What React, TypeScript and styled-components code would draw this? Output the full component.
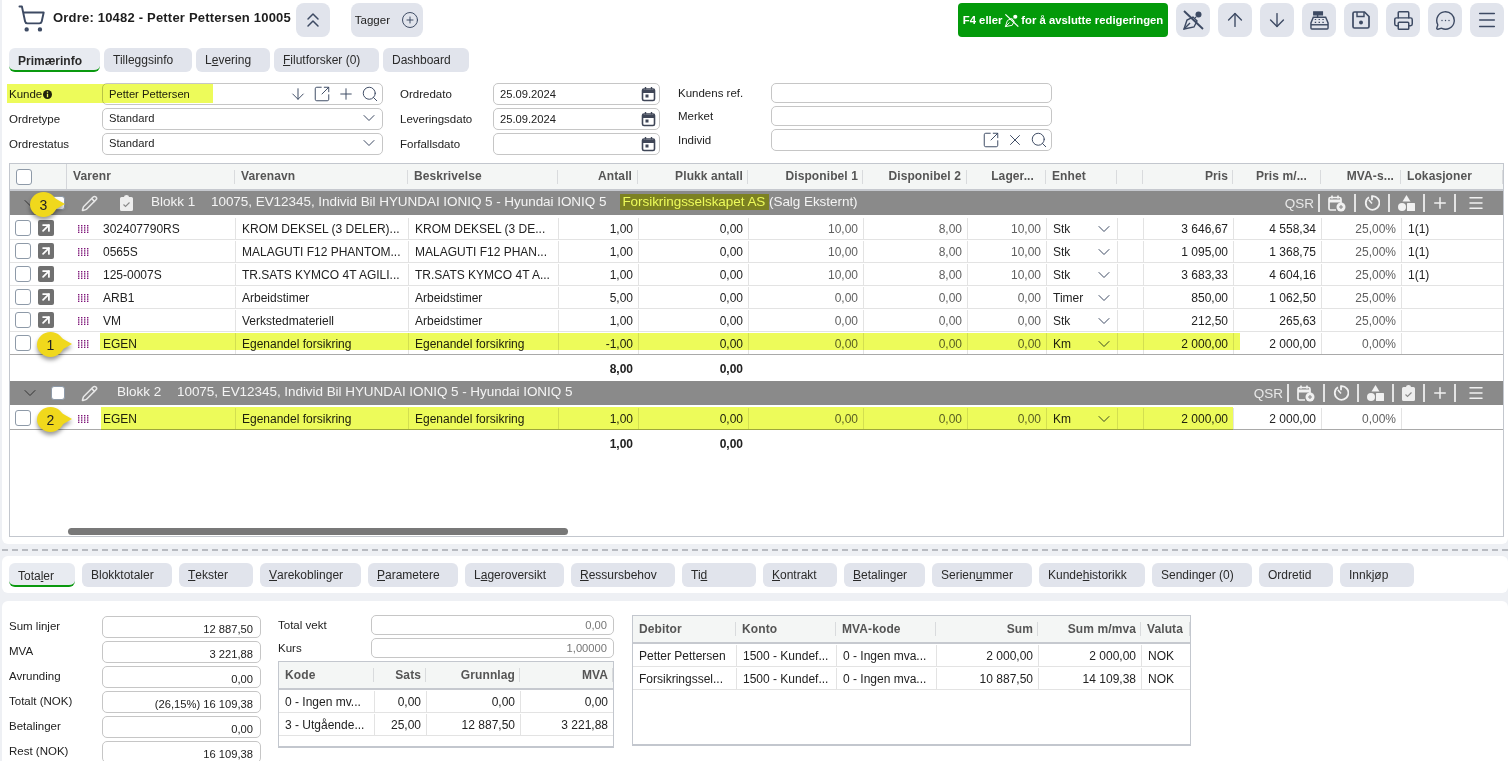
import React, { ReactNode } from "react";
import styled, { createGlobalStyle } from "styled-components";
import {
  ArrowDown,
  ArrowUp,
  ArrowUpRight,
  ChevronDown,
  ChevronsUp,
  CirclePlus,
  Menu,
  MessageCircleMore,
  Pencil,
  Plus,
  Printer,
  Search,
  ShoppingCart,
  SquareArrowOutUpRight,
  X,
} from "lucide-react";

const GlobalStyle = createGlobalStyle`
  html, body {
    margin: 0;
    padding: 0;
    background: #eef0f4;
  }
  * { box-sizing: border-box; }
  body {
    font-family: "Liberation Sans", Arial, sans-serif;
    font-size: 12px;
    color: #222;
  }
`;

const INK = "#3d4a63";
const YELLOW = "#edfb5a";

const Page = styled.div`
  width: 1508px;
  height: 761px;
  overflow: hidden;
  padding-left: 2px;
  display: flex;
  flex-direction: column;
`;

const TopPanel = styled.section`
  flex: none;
  height: 544px;
  background: #fff;
  padding: 3px 4px 7px 7px;
  border-radius: 0 0 6px 6px;
  display: flex;
  flex-direction: column;
`;

const Toolbar = styled.header`
  flex: none;
  height: 34px;
  display: flex;
  align-items: flex-start;
`;

const CartSlot = styled.span`
  width: 44px;
  height: 30px;
  padding-left: 8px;
  color: ${INK};
  display: flex;
  align-items: center;
`;

const Title = styled.h1`
  margin: 7px 5px 0 0;
  font-size: 13px;
  line-height: 16px;
  font-weight: 700;
  color: #1d1d1d;
  white-space: nowrap;
  letter-spacing: 0.2px;
`;

const ToolButton = styled.button`
  width: 34px;
  height: 34px;
  padding: 0;
  border: 0;
  border-radius: 8px;
  background: #e1e4ec;
  color: ${INK};
  display: flex;
  align-items: center;
  justify-content: center;
  font: inherit;
`;

const TagButton = styled(ToolButton)`
  width: 72px;
  margin-left: 21px;
  gap: 11px;
  color: #222;
  font-size: 11.5px;
  svg {
    color: ${INK};
  }
`;

const RightTools = styled.div`
  margin-left: auto;
  display: flex;
  gap: 8px;
`;

const FinishButton = styled.button`
  width: 210px;
  height: 34px;
  padding: 0;
  border: 0;
  border-radius: 4px;
  background: #039a0a;
  color: #fff;
  font: inherit;
  font-size: 11.3px;
  font-weight: 700;
  display: flex;
  align-items: center;
  justify-content: center;
  gap: 2px;
  white-space: nowrap;
`;

const TabRow = styled.nav`
  flex: none;
  display: flex;
  gap: 4px;
  margin-top: 11px;
`;

const Tab = styled.div<{ $w: number; $active?: boolean }>`
  flex: none;
  width: ${(p) => p.$w}px;
  height: 24px;
  padding: ${(p) => (p.$active ? "3px 0 0 9px" : "0 0 1px 9px")};
  background: ${(p) => (p.$active ? "#e8ebf1" : "#e1e4ec")};
  border-radius: 6px;
  border-bottom: ${(p) => (p.$active ? "2px solid #0a990f" : "0")};
  display: flex;
  align-items: center;
  white-space: nowrap;
  color: #2a2a2a;
  font-weight: ${(p) => (p.$active ? 700 : 400)};
  u {
    text-underline-offset: 1px;
  }
`;

const FormArea = styled.div`
  flex: none;
  display: flex;
  margin-top: 11px;
  height: 80px;
`;

const FormColumn = styled.div<{ $input: number; $pitch: number; $gap?: number }>`
  display: grid;
  grid-template-columns: 93px ${(p) => p.$input}px;
  grid-auto-rows: ${(p) => p.$pitch}px;
  margin-left: ${(p) => p.$gap ?? 0}px;
  position: relative;
`;

const FieldLabel = styled.label<{ $h?: number }>`
  display: flex;
  align-items: center;
  height: ${(p) => p.$h ?? 22}px;
  color: #222;
  font-size: 11.5px;
  gap: 1px;
`;

const FieldBox = styled.div<{ $h?: number; $right?: boolean; $muted?: boolean }>`
  height: ${(p) => p.$h ?? 22}px;
  background: #fff;
  border: 1px solid #c6c6c6;
  border-radius: 5px;
  padding: 0 6px;
  font-size: 11.2px;
  display: flex;
  align-items: center;
  justify-content: ${(p) => (p.$right ? "flex-end" : "flex-start")};
  color: ${(p) => (p.$muted ? "#777" : "#222")};
  white-space: nowrap;
`;

const SelectBox = styled(FieldBox)`
  padding-bottom: 2px;
`;

const BoxIcons = styled.span`
  margin: 0 -3px 0 auto;
  display: flex;
  align-items: center;
  gap: 6px;
  color: ${INK};
`;

const Marker = styled.span<{ $l: number; $t: number; $w: number; $h: number }>`
  position: absolute;
  left: ${(p) => p.$l}px;
  top: ${(p) => p.$t}px;
  width: ${(p) => p.$w}px;
  height: ${(p) => p.$h}px;
  background: ${YELLOW};
  mix-blend-mode: multiply;
  pointer-events: none;
`;

const GridFrame = styled.div`
  flex: none;
  height: 374px;
  width: 1495px;
  border: 1px solid #c3c7ce;
  background: #fff;
  display: flex;
  flex-direction: column;
  position: relative;
`;

const ORDER_COLS =
  "57px 168px 173px 150px 80px 110px 115px 104px 79px 71px 26px 90px 88px 80px 102px";

const Row = styled.div<{ $cols: string; $h?: number; $line?: string }>`
  flex: none;
  display: grid;
  grid-template-columns: ${(p) => p.$cols};
  height: ${(p) => p.$h ?? 23}px;
  border-bottom: 1px solid ${(p) => p.$line ?? "#e3e3e3"};
  position: relative;
`;

const HeadRow = styled(Row)`
  background: #f4f6f5;
  border-bottom: 2px solid #c6c9cf;
`;

const HeadCell = styled.div<{ $right?: boolean; $pad?: number }>`
  display: flex;
  align-items: center;
  justify-content: ${(p) => (p.$right ? "flex-end" : "flex-start")};
  padding: 0 ${(p) => p.$pad ?? 5}px 1px 6px;
  font-weight: 700;
  color: #555;
  white-space: nowrap;
  overflow: hidden;
  letter-spacing: 0.1px;
  background: linear-gradient(#d9dbdd, #d9dbdd) right center / 1px 14px no-repeat;
`;

const CheckHead = styled.div`
  display: flex;
  align-items: center;
  padding-left: 6px;
  border-right: 1px solid #d4d6da;
`;

const Cell = styled.div<{ $right?: boolean; $muted?: boolean; $bold?: boolean; $plain?: boolean }>`
  display: flex;
  align-items: center;
  justify-content: ${(p) => (p.$right ? "flex-end" : "flex-start")};
  padding: 0 5px 0 6px;
  margin-top: 1px;
  border-left: ${(p) => (p.$plain ? "0" : "1px solid #e3e3e3")};
  color: ${(p) => (p.$muted ? "#5f5f5f" : "#222")};
  font-weight: ${(p) => (p.$bold ? 700 : 400)};
  white-space: nowrap;
  overflow: hidden;
`;

const SelectCell = styled(Cell)`
  justify-content: space-between;
  padding-right: 3px;
  svg {
    color: ${INK};
  }
`;

const LeadCell = styled.div`
  display: flex;
  align-items: center;
  gap: 7px;
  padding-left: 5px;
`;

const CheckBox = styled.span<{ $size?: number }>`
  width: ${(p) => p.$size ?? 16}px;
  height: ${(p) => p.$size ?? 16}px;
  flex: none;
  display: block;
  background: #fff;
  border: 1px solid #8e9aa8;
  border-radius: 3px;
`;

const LinkBadge = styled.span`
  width: 16px;
  height: 16px;
  flex: none;
  border-radius: 2px;
  background: #707070;
  color: #fff;
  display: flex;
  align-items: center;
  justify-content: center;
`;

const ItemCell = styled(Cell)`
  padding-left: 11px;
  gap: 14px;
`;

const BlockBar = styled.div`
  flex: none;
  height: 24px;
  margin-bottom: 2px;
  background: #8a8a8a;
  color: #f4f4f4;
  display: flex;
  align-items: center;
  padding: 0 18px 0 14px;
  gap: 16px;
  position: relative;
  white-space: nowrap;
`;

const BlockChevron = styled.span`
  width: 11px;
  height: 20px;
  color: #333;
  display: flex;
  align-items: center;
  justify-content: center;
  svg {
    flex: none;
  }
`;

const ClipSlot = styled.span`
  display: flex;
  margin-left: 6px;
`;

const BlockName = styled.span<{ $lead: number }>`
  width: 60px;
  margin: 0 -16px 2px ${(p) => p.$lead}px;
  flex: none;
  font-size: 13.5px;
  line-height: 16px;
`;

const BlockText = styled.span`
  margin-bottom: 2px;
  font-size: 13.5px;
  line-height: 16px;
  letter-spacing: -0.05px;
`;

const Insurer = styled.span`
  margin-left: 14px;
  padding: 0 0 1px 2px;
  background: #7c8122;
  color: ${YELLOW};
`;

const BlockTools = styled.div`
  margin-left: auto;
  display: flex;
  align-items: center;
  gap: 8px;
  color: #f1f1f1;
  font-size: 13.5px;
`;

const ToolSep = styled.span`
  width: 2px;
  height: 18px;
  background: #e4e4e4;
`;

const QsrLabel = styled.span`
  color: #e8e8e8;
  margin-right: -4px;
`;

const PlusSlot = styled.span`
  display: flex;
  margin: 0 -3px 0 -2px;
`;

const MenuSlot = styled.span`
  display: flex;
  margin-left: 3px;
`;

const SumRow = styled(Row)`
  height: 26px;
  border-bottom: 0;
`;

const Spacer = styled.div`
  flex: 1;
`;

const ScrollTrack = styled.div`
  flex: none;
  height: 7px;
  margin: 0 0 1px 58px;
`;

const ScrollThumb = styled.div`
  width: 500px;
  height: 7px;
  border-radius: 4px;
  background: #787878;
`;

const Bubble = styled.span<{ $l: number; $t: number }>`
  position: absolute;
  left: ${(p) => p.$l}px;
  top: ${(p) => p.$t}px;
  width: 27px;
  height: 25px;
  border-radius: 50%;
  background: #f0d81c;
  color: #222;
  font-size: 14px;
  display: flex;
  align-items: center;
  justify-content: center;
  filter: drop-shadow(0 3px 2px rgba(0, 0, 0, 0.4));
  z-index: 2;
  &::after {
    content: "";
    position: absolute;
    left: 21px;
    top: 4px;
    border-left: 14px solid #f0d81c;
    border-top: 8px solid transparent;
    border-bottom: 8px solid transparent;
  }
`;

const SplitLine = styled.div`
  flex: none;
  height: 12px;
  display: flex;
  align-items: center;
  &::before {
    content: "";
    width: 100%;
    border-top: 2px dashed #b8bbc1;
  }
`;

const LowerTabBand = styled.nav`
  flex: none;
  height: 37px;
  background: #fff;
  border-radius: 6px;
  padding: 7px 0 0 7px;
  display: flex;
  gap: 7px;
`;

const LowerTab = styled(Tab)`
  font-weight: 400;
  font-size: 12px;
`;

const LowerPanel = styled.section`
  margin-top: 8px;
  flex: 1;
  min-height: 0;
  background: #fff;
  border-radius: 6px 6px 0 0;
  padding: 14px 0 0 7px;
  display: flex;
`;

const TotalsGrid = styled.div`
  display: grid;
  grid-template-columns: 93px 159px;
  grid-auto-rows: 25px;
  width: 252px;
  padding-top: 1px;
`;

const TotalValue = styled(FieldBox)`
  align-items: flex-end;
  padding: 0 7px 2px 5px;
`;

const MiddleColumn = styled.div`
  width: 336px;
  margin-left: 17px;
`;

const MiddleField = styled.div`
  display: grid;
  grid-template-columns: 93px 243px;
  height: 23px;
`;

const MiniTable = styled.div<{ $h: number }>`
  height: ${(p) => p.$h}px;
  border: 1px solid #c3c7ce;
  border-bottom: 2px solid #c3c7ce;
  background: #fff;
`;

const MiniHead = styled(HeadRow)`
  height: 28px;
`;

const DebitorTable = styled(MiniTable)`
  width: 559px;
  margin-left: 18px;
`;

const Drag = () => (
  <svg width="11" height="8" viewBox="0 0 11 8" style={{ flex: "none" }}>
    {[0, 3, 6, 9].map((x) =>
      [0, 2.2, 4.4, 6.6].map((y) => <rect key={`${x}-${y}`} x={x} y={y} width="1.4" height="1.4" fill="#7d1478" />)
    )}
  </svg>
);

const CalendarMini = () => (
  <svg width="15" height="16" viewBox="0 0 15 16" fill="none">
    <rect x="1.5" y="3" width="12" height="11.5" rx="1.5" stroke="#3f4657" strokeWidth="1.6" />
    <path d="M1.5 5.5h12" stroke="#3f4657" strokeWidth="3" />
    <path d="M4.5 1v2.5M10.5 1v2.5" stroke="#3f4657" strokeWidth="1.4" />
    <rect x="4.5" y="8.5" width="3" height="3" fill="#3f4657" />
  </svg>
);

const NibOff = ({ color, size = 22 }: { color: string; size?: number }) => (
  <svg width={size} height={size} viewBox="0 0 22 22" fill="none" stroke={color} strokeWidth="1.4">
    <path d="M2 20l3-9 6-3 4 4-3 6z" />
    <path d="M2 20l6-6" />
    <circle cx="16.5" cy="5.5" r="3" fill={color} stroke="none" />
    <path d="M13 8l1 1" />
    <path d="M2 2l19 18" strokeWidth="1.9" />
  </svg>
);

const CashRegister = () => (
  <svg width="19" height="19" viewBox="0 0 20 20" fill="none" stroke={INK} strokeWidth="1.5">
    <rect x="4" y="1" width="9" height="3" fill={INK} />
    <path d="M8 4v2.500" />
    <path d="M3.500 6.500h13l2.500 6v5.500a1 1 0 0 1-1 1H2a1 1 0 0 1-1-1v-5.500z" />
    <path d="M1 14.500h18" />
    <path d="M5 9h1.500M9 9h1.500M13 9h1.500M5 12h1.500M9 12h1.500M13 12h1.500" strokeWidth="1.200" />
  </svg>
);

const Floppy = () => (
  <svg width="18" height="18" viewBox="0 0 18 18" fill="none" stroke={INK} strokeWidth="1.700">
    <path d="M2.500 1h10L17 5.500v10a1.500 1.500 0 0 1-1.500 1.500h-13A1.500 1.500 0 0 1 1 15.500v-13A1.500 1.500 0 0 1 2.500 1z" />
    <path d="M5 1v4.500h7V1" strokeWidth="1.400" />
    <circle cx="9" cy="11.500" r="2" fill={INK} stroke="none" />
  </svg>
);

const ClipboardSolid = () => (
  <svg width="13" height="16" viewBox="0 0 13 16">
    <path
      d="M1.5 2H4a2.5 2 0 0 1 5 0h2.5A1.5 1.5 0 0 1 13 3.5v11a1.5 1.5 0 0 1-1.5 1.5h-10A1.5 1.5 0 0 1 0 14.500v-11A1.500 1.500 0 0 1 1.500 2z"
      fill="#eeeeee"
    />
    <path d="M3.500 9.500l2 2 4-4" fill="none" stroke="#8a8a8a" strokeWidth="1.100" />
  </svg>
);

const CalendarAdd = () => (
  <svg width="18" height="17" viewBox="0 0 18 17" fill="none">
    <path d="M1 4.500h12v3H1z" fill="#f1f1f1" />
    <path d="M8 15H2.500A1.500 1.500 0 0 1 1 13.500V4a1.500 1.500 0 0 1 1.500-1.500h9A1.500 1.500 0 0 1 13 4v4" stroke="#f1f1f1" strokeWidth="1.700" />
    <path d="M4 .5v3M10 .5v3" stroke="#f1f1f1" strokeWidth="1.700" />
    <circle cx="13" cy="12" r="4.500" fill="#f1f1f1" />
    <path d="M13 10v4M11 12h4" stroke="#8a8a8a" strokeWidth="1.100" />
  </svg>
);

const Dial = () => (
  <svg width="16" height="16" viewBox="0 0 16 16" fill="none" stroke="#f1f1f1" strokeWidth="1.800">
    <path d="M5 2.200A6.800 6.800 0 1 0 8 1.200v4" />
    <path d="M4.800 4.800 8 8.500" strokeWidth="1.500" />
  </svg>
);

const Shapes = () => (
  <svg width="17" height="16" viewBox="0 0 17 16" fill="#f1f1f1">
    <path d="M8.500 0l4 6.500h-8z" />
    <circle cx="4" cy="12" r="4" />
    <rect x="9" y="8" width="8" height="8" rx="0.500" />
  </svg>
);

interface OrderLine {
  no: string;
  name: string;
  desc: string;
  antall: string;
  d1: string;
  d2: string;
  lager: string;
  enhet: string;
  pris: string;
  prisM: string;
  mva: string;
  lok?: string;
  linked?: boolean;
}

const firstBlock: OrderLine[] = [
  { no: "302407790RS", name: "KROM DEKSEL (3 DELER)...", desc: "KROM DEKSEL (3 DE...", antall: "1,00", d1: "10,00", d2: "8,00", lager: "10,00", enhet: "Stk", pris: "3 646,67", prisM: "4 558,34", mva: "25,00%", lok: "1(1)", linked: true },
  { no: "0565S", name: "MALAGUTI F12 PHANTOM...", desc: "MALAGUTI F12 PHAN...", antall: "1,00", d1: "10,00", d2: "8,00", lager: "10,00", enhet: "Stk", pris: "1 095,00", prisM: "1 368,75", mva: "25,00%", lok: "1(1)", linked: true },
  { no: "125-0007S", name: "TR.SATS KYMCO 4T AGILI...", desc: "TR.SATS KYMCO 4T A...", antall: "1,00", d1: "10,00", d2: "8,00", lager: "10,00", enhet: "Stk", pris: "3 683,33", prisM: "4 604,16", mva: "25,00%", lok: "1(1)", linked: true },
  { no: "ARB1", name: "Arbeidstimer", desc: "Arbeidstimer", antall: "5,00", d1: "0,00", d2: "0,00", lager: "0,00", enhet: "Timer", pris: "850,00", prisM: "1 062,50", mva: "25,00%", linked: true },
  { no: "VM", name: "Verkstedmateriell", desc: "Arbeidstimer", antall: "1,00", d1: "0,00", d2: "0,00", lager: "0,00", enhet: "Stk", pris: "212,50", prisM: "265,63", mva: "25,00%", linked: true },
];

const egen = (antall: string): OrderLine => ({
  no: "EGEN",
  name: "Egenandel forsikring",
  desc: "Egenandel forsikring",
  antall,
  d1: "0,00",
  d2: "0,00",
  lager: "0,00",
  enhet: "Km",
  pris: "2 000,00",
  prisM: "2 000,00",
  mva: "0,00%",
});

const headers: { label: string; right?: boolean; pad?: number }[] = [
  { label: "Varenr" },
  { label: "Varenavn" },
  { label: "Beskrivelse" },
  { label: "Antall", right: true, pad: 6 },
  { label: "Plukk antall", right: true },
  { label: "Disponibel 1", right: true },
  { label: "Disponibel 2", right: true, pad: 6 },
  { label: "Lager...", right: true, pad: 12 },
  { label: "Enhet" },
  { label: "" },
  { label: "Pris", right: true },
  { label: "Pris m/...", right: true, pad: 14 },
  { label: "MVA-s...", right: true, pad: 7 },
  { label: "Lokasjoner" },
];

function LineRow({ line, last, children }: { line: OrderLine; last?: boolean; children?: ReactNode }) {
  return (
    <Row $cols={ORDER_COLS} $line={last ? "#a9a9a9" : undefined}>
      <LeadCell>
        <CheckBox />
        {line.linked && (
          <LinkBadge>
            <ArrowUpRight size={14} strokeWidth={3} />
          </LinkBadge>
        )}
      </LeadCell>
      <ItemCell $plain>
        <Drag />
        <span>{line.no}</span>
      </ItemCell>
      <Cell>{line.name}</Cell>
      <Cell>{line.desc}</Cell>
      <Cell $right>{line.antall}</Cell>
      <Cell $right>0,00</Cell>
      <Cell $right $muted>{line.d1}</Cell>
      <Cell $right $muted>{line.d2}</Cell>
      <Cell $right $muted>{line.lager}</Cell>
      <SelectCell>
        {line.enhet}
        <ChevronDown size={20} strokeWidth={1.2} />
      </SelectCell>
      <Cell />
      <Cell $right>{line.pris}</Cell>
      <Cell $right>{line.prisM}</Cell>
      <Cell $right $muted>{line.mva}</Cell>
      <Cell>{line.lok}</Cell>
      {children}
    </Row>
  );
}

function SumLine({ antall }: { antall: string }) {
  return (
    <SumRow $cols={ORDER_COLS}>
      <span />
      <span />
      <span />
      <span />
      <Cell $right $bold $plain>{antall}</Cell>
      <Cell $right $bold $plain>0,00</Cell>
    </SumRow>
  );
}

function BlockLead() {
  return (
    <>
      <BlockChevron>
        <ChevronDown size={20} strokeWidth={1.2} />
      </BlockChevron>
      <CheckBox $size={14} />
      <Pencil size={17} strokeWidth={2.1} color="#e8e8e8" />
    </>
  );
}

function BlockTail() {
  return (
    <>
      <PlusSlot>
        <Plus size={18} strokeWidth={2} />
      </PlusSlot>
      <ToolSep />
      <MenuSlot>
        <Menu size={18} strokeWidth={2} />
      </MenuSlot>
    </>
  );
}

const topTabs: { w: number; label: ReactNode; active?: boolean }[] = [
  { w: 91, label: "Primærinfo", active: true },
  { w: 88, label: "Tilleggsinfo" },
  { w: 74, label: <>L<u>e</u>vering</> },
  { w: 105, label: <><u>F</u>ilutforsker (0)</> },
  { w: 86, label: "Dashboard" },
];

const lowerTabs: { w: number; label: ReactNode; active?: boolean }[] = [
  { w: 66, label: <>Tota<u>l</u>er</>, active: true },
  { w: 90, label: "Blokktotaler" },
  { w: 74, label: <><u>T</u>ekster</> },
  { w: 101, label: <><u>V</u>arekoblinger</> },
  { w: 90, label: <><u>P</u>arametere</> },
  { w: 99, label: <>L<u>a</u>geroversikt</> },
  { w: 104, label: <><u>R</u>essursbehov</> },
  { w: 74, label: <>Ti<u>d</u></> },
  { w: 74, label: <><u>K</u>ontrakt</> },
  { w: 81, label: <><u>B</u>etalinger</> },
  { w: 100, label: <>Serien<u>u</u>mmer</> },
  { w: 106, label: <>Kunde<u>h</u>istorikk</> },
  { w: 100, label: "Sendinger (0)" },
  { w: 74, label: "Ordretid" },
  { w: 74, label: "Innkjøp" },
];

const totals: [string, string][] = [
  ["Sum linjer", "12 887,50"],
  ["MVA", "3 221,88"],
  ["Avrunding", "0,00"],
  ["Totalt (NOK)", "(26,15%) 16 109,38"],
  ["Betalinger", "0,00"],
  ["Rest (NOK)", "16 109,38"],
];

const VAT_COLS = "95px 52px 94px 93px";
const DEBTOR_COLS = "103px 100px 100px 102px 103px 49px";

export default function App() {
  return (
    <>
      <GlobalStyle />
      <Page>
        <TopPanel>
          <Toolbar>
            <CartSlot>
              <ShoppingCart size={29} strokeWidth={1.6} />
            </CartSlot>
            <Title>Ordre: 10482 - Petter Pettersen 10005</Title>
            <ToolButton>
              <ChevronsUp size={24} strokeWidth={1.5} />
            </ToolButton>
            <TagButton>
              Tagger
              <CirclePlus size={18} strokeWidth={1.3} />
            </TagButton>
            <RightTools>
              <FinishButton>
                F4 eller <NibOff color="#fff" size={15} /> for å avslutte redigeringen
              </FinishButton>
              <ToolButton><NibOff color={INK} /></ToolButton>
              <ToolButton><ArrowUp size={22} strokeWidth={1.5} /></ToolButton>
              <ToolButton><ArrowDown size={22} strokeWidth={1.5} /></ToolButton>
              <ToolButton><CashRegister /></ToolButton>
              <ToolButton><Floppy /></ToolButton>
              <ToolButton><Printer size={21} strokeWidth={1.7} /></ToolButton>
              <ToolButton><MessageCircleMore size={21} strokeWidth={1.6} /></ToolButton>
              <ToolButton><Menu size={22} strokeWidth={1.6} /></ToolButton>
            </RightTools>
          </Toolbar>

          <TabRow>
            {topTabs.map((t, i) => (
              <Tab key={i} $w={t.w} $active={t.active}>{t.label}</Tab>
            ))}
          </TabRow>

          <FormArea>
            <FormColumn $input={281} $pitch={25}>
              <FieldLabel>
                Kunde
                <svg width="9" height="9" viewBox="0 0 9 9">
                  <circle cx="4.5" cy="4.5" r="4.5" fill="#222" />
                  <path d="M4.500 1.500v1.300M4.500 3.800v3.400" stroke="#fff" strokeWidth="1.300" />
                </svg>
              </FieldLabel>
              <FieldBox>
                Petter Pettersen
                <BoxIcons>
                  <ArrowDown size={18} strokeWidth={1.3} />
                  <SquareArrowOutUpRight size={18} strokeWidth={1.3} />
                  <Plus size={18} strokeWidth={1.3} />
                  <Search size={18} strokeWidth={1.3} />
                </BoxIcons>
              </FieldBox>
              <FieldLabel>Ordretype</FieldLabel>
              <SelectBox>
                Standard
                <BoxIcons><ChevronDown size={20} strokeWidth={1.2} /></BoxIcons>
              </SelectBox>
              <FieldLabel>Ordrestatus</FieldLabel>
              <SelectBox>
                Standard
                <BoxIcons><ChevronDown size={20} strokeWidth={1.2} /></BoxIcons>
              </SelectBox>
              <Marker $l={-2} $t={1} $w={206} $h={19} />
            </FormColumn>

            <FormColumn $input={167} $pitch={25} $gap={17}>
              <FieldLabel>Ordredato</FieldLabel>
              <FieldBox>25.09.2024<BoxIcons><CalendarMini /></BoxIcons></FieldBox>
              <FieldLabel>Leveringsdato</FieldLabel>
              <FieldBox>25.09.2024<BoxIcons><CalendarMini /></BoxIcons></FieldBox>
              <FieldLabel>Forfallsdato</FieldLabel>
              <FieldBox><BoxIcons><CalendarMini /></BoxIcons></FieldBox>
            </FormColumn>

            <FormColumn $input={281} $pitch={23} $gap={18}>
              <FieldLabel $h={20}>Kundens ref.</FieldLabel>
              <FieldBox $h={20} />
              <FieldLabel $h={20}>Merket</FieldLabel>
              <FieldBox $h={20} />
              <FieldLabel>Individ</FieldLabel>
              <FieldBox>
                <BoxIcons>
                  <SquareArrowOutUpRight size={18} strokeWidth={1.3} />
                  <X size={18} strokeWidth={1.3} />
                  <Search size={18} strokeWidth={1.3} />
                </BoxIcons>
              </FieldBox>
            </FormColumn>
          </FormArea>

          <GridFrame>
            <HeadRow $cols={ORDER_COLS} $h={27}>
              <CheckHead><CheckBox /></CheckHead>
              {headers.map((h, i) => (
                <HeadCell key={i} $right={h.right} $pad={h.pad}>{h.label}</HeadCell>
              ))}
            </HeadRow>

            <BlockBar>
              <BlockLead />
              <ClipSlot><ClipboardSolid /></ClipSlot>
              <BlockName $lead={2}>Blokk 1</BlockName>
              <BlockText>
                10075, EV12345, Individ Bil HYUNDAI IONIQ 5 - Hyundai IONIQ 5
                <Insurer>Forsikringsselskapet AS </Insurer> (Salg Eksternt)
              </BlockText>
              <BlockTools>
                <QsrLabel>QSR</QsrLabel>
                <ToolSep />
                <CalendarAdd />
                <ToolSep />
                <Dial />
                <ToolSep />
                <Shapes />
                <ToolSep />
                <BlockTail />
              </BlockTools>
              <Bubble $l={20} $t={1}>3</Bubble>
            </BlockBar>

            {firstBlock.map((l) => <LineRow key={l.no} line={l} />)}
            <LineRow line={egen("-1,00")} last>
              <Bubble $l={27} $t={0}>1</Bubble>
              <Marker $l={90} $t={1} $w={1140} $h={17} />
            </LineRow>
            <SumLine antall="8,00" />

            <BlockBar>
              <BlockLead />
              <BlockName $lead={3}>Blokk 2</BlockName>
              <BlockText>10075, EV12345, Individ Bil HYUNDAI IONIQ 5 - Hyundai IONIQ 5</BlockText>
              <BlockTools>
                <QsrLabel>QSR</QsrLabel>
                <ToolSep />
                <CalendarAdd />
                <ToolSep />
                <Dial />
                <ToolSep />
                <Shapes />
                <ToolSep />
                <ClipboardSolid />
                <ToolSep />
                <BlockTail />
              </BlockTools>
            </BlockBar>
            <LineRow line={egen("1,00")} last>
              <Bubble $l={27} $t={0}>2</Bubble>
              <Marker $l={91} $t={0} $w={1132} $h={23} />
            </LineRow>
            <SumLine antall="1,00" />

            <Spacer />
            <ScrollTrack><ScrollThumb /></ScrollTrack>
          </GridFrame>
        </TopPanel>

        <SplitLine />

        <LowerTabBand>
          {lowerTabs.map((t, i) => (
            <LowerTab key={i} $w={t.w} $active={t.active}>{t.label}</LowerTab>
          ))}
        </LowerTabBand>

        <LowerPanel>
          <TotalsGrid>
            {totals.map(([label, value]) => (
              <React.Fragment key={label}>
                <FieldLabel $h={20}>{label}</FieldLabel>
                <TotalValue $right>{value}</TotalValue>
              </React.Fragment>
            ))}
          </TotalsGrid>

          <MiddleColumn>
            <MiddleField>
              <FieldLabel $h={20}>Total vekt</FieldLabel>
              <FieldBox $h={20} $right $muted>0,00</FieldBox>
            </MiddleField>
            <MiddleField>
              <FieldLabel $h={20}>Kurs</FieldLabel>
              <FieldBox $h={20} $right $muted>1,00000</FieldBox>
            </MiddleField>
            <MiniTable $h={87}>
              <MiniHead $cols={VAT_COLS}>
                <HeadCell>Kode</HeadCell>
                <HeadCell $right>Sats</HeadCell>
                <HeadCell $right>Grunnlag</HeadCell>
                <HeadCell $right>MVA</HeadCell>
              </MiniHead>
              <Row $cols={VAT_COLS}>
                <Cell $plain>0 - Ingen mv...</Cell>
                <Cell $right>0,00</Cell>
                <Cell $right>0,00</Cell>
                <Cell $right>0,00</Cell>
              </Row>
              <Row $cols={VAT_COLS}>
                <Cell $plain>3 - Utgående...</Cell>
                <Cell $right>25,00</Cell>
                <Cell $right>12 887,50</Cell>
                <Cell $right>3 221,88</Cell>
              </Row>
            </MiniTable>
          </MiddleColumn>

          <DebitorTable $h={131}>
            <MiniHead $cols={DEBTOR_COLS}>
              <HeadCell>Debitor</HeadCell>
              <HeadCell>Konto</HeadCell>
              <HeadCell>MVA-kode</HeadCell>
              <HeadCell $right>Sum</HeadCell>
              <HeadCell $right>Sum m/mva</HeadCell>
              <HeadCell>Valuta</HeadCell>
            </MiniHead>
            <Row $cols={DEBTOR_COLS}>
              <Cell $plain>Petter Pettersen</Cell>
              <Cell>1500 - Kundef...</Cell>
              <Cell>0 - Ingen mva...</Cell>
              <Cell $right>2 000,00</Cell>
              <Cell $right>2 000,00</Cell>
              <Cell>NOK</Cell>
            </Row>
            <Row $cols={DEBTOR_COLS}>
              <Cell $plain>Forsikringssel...</Cell>
              <Cell>1500 - Kundef...</Cell>
              <Cell>0 - Ingen mva...</Cell>
              <Cell $right>10 887,50</Cell>
              <Cell $right>14 109,38</Cell>
              <Cell>NOK</Cell>
            </Row>
          </DebitorTable>
        </LowerPanel>
      </Page>
    </>
  );
}
